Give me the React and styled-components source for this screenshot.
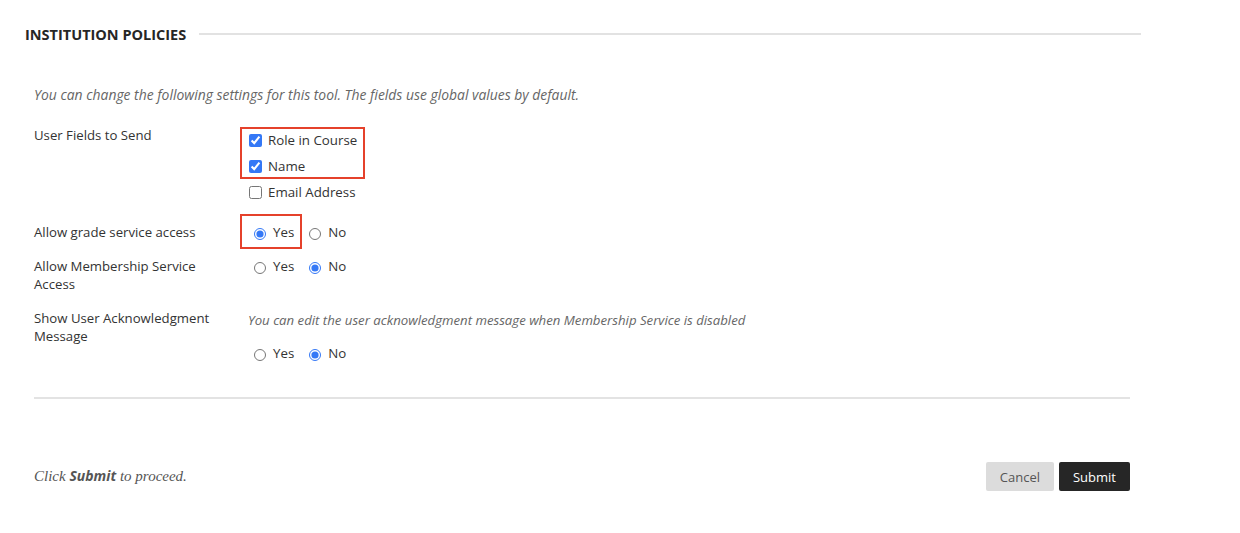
import React from 'react';
import styled, { createGlobalStyle } from 'styled-components';

const GlobalStyle = createGlobalStyle`
  body {
    margin: 0;
    background: #fff;
    font-family: "Open Sans", "Liberation Sans", sans-serif;
    color: #333;
  }
`;

const Page = styled.div`
  padding: 22px 0 40px 25px;
  width: 1116px;
`;

const SectionHeader = styled.div`
  display: flex;
  align-items: center;
  gap: 13px;
  height: 24px;
`;

const SectionTitle = styled.h2`
  margin: 0;
  font-size: 14.5px;
  font-weight: 700;
  color: #262626;
  white-space: nowrap;
`;

const Rule = styled.div`
  flex: 1;
  height: 2px;
  background: #e2e2e2;
`;

const Body = styled.div`
  margin-left: 9px;
  width: 1096px;
`;

const Intro = styled.p`
  margin: 40px 0 0;
  font-size: 13.9px;
  line-height: 18px;
  font-style: italic;
  color: #666;
`;

const Fields = styled.div`
  margin-top: 22px;
  display: flex;
  flex-direction: column;
  gap: 16px;
`;

const Row = styled.div`
  display: grid;
  grid-template-columns: 214px 1fr;
  align-items: start;
`;

const Label = styled.div`
  font-size: 13.2px;
  line-height: 18px;
  color: #333;
  width: 180px;
`;

const CheckList = styled.div`
  display: flex;
  flex-direction: column;
  align-items: flex-start;
  gap: 6px;
  padding: 4px 0 5px;
`;

const Highlight = styled.div`
  display: flex;
  flex-direction: ${p => (p.$column ? 'column' : 'row')};
  align-items: ${p => (p.$column ? 'flex-start' : 'center')};
  gap: ${p => (p.$column ? '6px' : '0')};
  border: 2px solid #e5412b;
  padding: ${p => p.$pad};
  margin: ${p => p.$margin};
`;

const CheckItem = styled.label`
  display: flex;
  align-items: center;
  gap: 6px;
  height: 20px;
  font-size: 13.3px;
  color: #333;
  white-space: nowrap;

  input {
    margin: 0 0 0 1px;
    width: 13px;
    height: 13px;
    accent-color: #3478f6;
  }
`;

const RadioGroup = styled.div`
  display: flex;
  align-items: center;
  gap: 9px;
  margin-top: ${p => p.$top || 0}px;
`;

const RadioItem = styled.label`
  display: flex;
  align-items: center;
  gap: 7px;
  height: 18px;
  font-size: 13.3px;
  color: #333;

  input {
    margin: 3px 0 0 6px;
    width: 12px;
    height: 12px;
    accent-color: #3478f6;
  }
`;

const Helper = styled.div`
  margin-top: 2px;
  font-size: 13.2px;
  line-height: 18px;
  font-style: italic;
  color: #666;
`;

const Divider = styled.hr`
  margin: 35px 0 0;
  border: 0;
  height: 2px;
  background: #e3e3e3;
`;

const Footer = styled.div`
  margin-top: 63px;
  display: flex;
  justify-content: space-between;
  align-items: center;
`;

const Note = styled.p`
  margin: -2px 0 0;
  font-family: "Liberation Serif", "DejaVu Serif", serif;
  font-style: italic;
  font-size: 15px;
  color: #555;

  b {
    font-family: "Open Sans", "Liberation Sans", sans-serif;
    font-weight: 700;
    font-size: 14px;
  }
`;

const Actions = styled.div`
  display: flex;
  gap: 5px;
`;

const Button = styled.button`
  height: 29px;
  padding: 0 14px;
  border: 0;
  border-radius: 2px;
  font-family: "Open Sans", "Liberation Sans", sans-serif;
  font-size: 13px;
  background: ${p => (p.$primary ? '#262626' : '#dcdcdc')};
  color: ${p => (p.$primary ? '#fff' : '#555')};
  cursor: pointer;
`;

function Radio({ name, value, checked }) {
  return (
    <RadioItem>
      <input type="radio" name={name} defaultChecked={checked} value={value} />
      {value}
    </RadioItem>
  );
}

export default function App() {
  return (
    <>
      <GlobalStyle />
      <Page>
        <SectionHeader>
          <SectionTitle>INSTITUTION POLICIES</SectionTitle>
          <Rule />
        </SectionHeader>
        <Body>
          <Intro>You can change the following settings for this tool. The fields use global values by default.</Intro>
          <Fields>
            <Row>
              <Label>User Fields to Send</Label>
              <CheckList>
                <Highlight $column $pad="1px 6px 1px 6px" $margin="-3px 0 -3px -8px">
                  <CheckItem><input type="checkbox" defaultChecked />Role in Course</CheckItem>
                  <CheckItem><input type="checkbox" defaultChecked />Name</CheckItem>
                </Highlight>
                <CheckItem><input type="checkbox" />Email Address</CheckItem>
              </CheckList>
            </Row>
            <Row>
              <Label>Allow grade service access</Label>
              <RadioGroup>
                <Highlight $pad="7px 6px 6px 6px" $margin="-9px -8px -8px -8px">
                  <Radio name="grade" value="Yes" checked />
                </Highlight>
                <Radio name="grade" value="No" />
              </RadioGroup>
            </Row>
            <Row>
              <Label>Allow Membership Service Access</Label>
              <RadioGroup>
                <Radio name="membership" value="Yes" />
                <Radio name="membership" value="No" checked />
              </RadioGroup>
            </Row>
            <Row>
              <Label>Show User Acknowledgment Message</Label>
              <div>
                <Helper>You can edit the user acknowledgment message when Membership Service is disabled</Helper>
                <RadioGroup $top={15}>
                  <Radio name="ack" value="Yes" />
                  <Radio name="ack" value="No" checked />
                </RadioGroup>
              </div>
            </Row>
          </Fields>
          <Divider />
          <Footer>
            <Note>Click <b>Submit</b> to proceed.</Note>
            <Actions>
              <Button>Cancel</Button>
              <Button $primary>Submit</Button>
            </Actions>
          </Footer>
        </Body>
      </Page>
    </>
  );
}
